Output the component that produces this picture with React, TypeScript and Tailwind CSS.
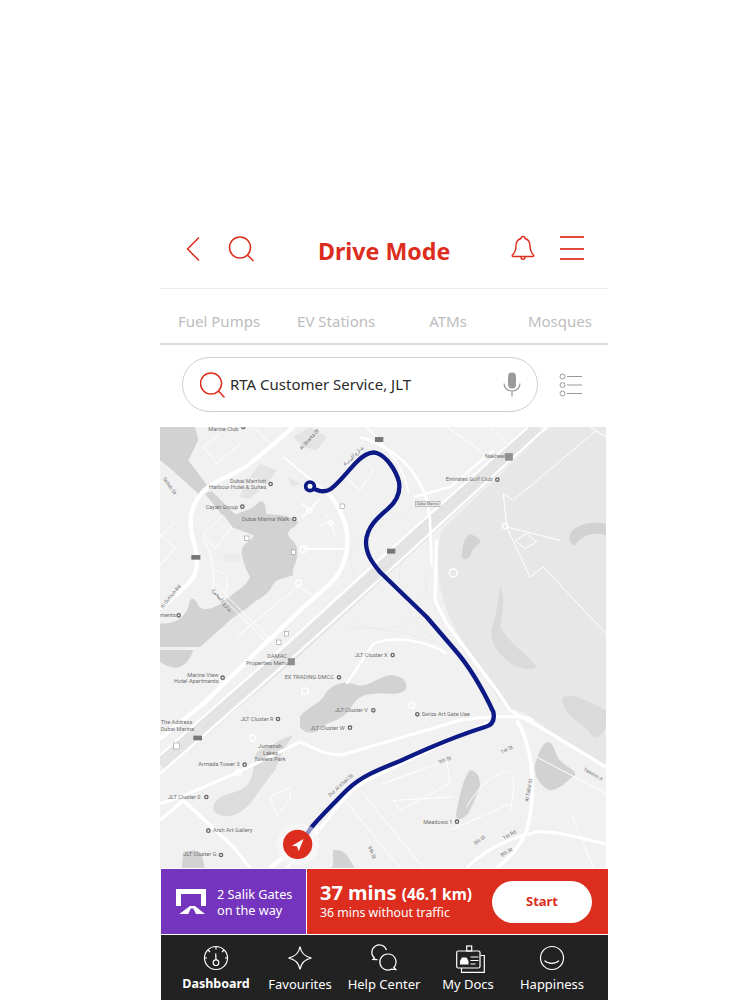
import React from "react";

const RED = "#dc2d1e";

const Header = () => (
  <div className="flex h-[69px] items-start border-b border-[#ececec] pt-[10px]">
    <svg className="ml-[25px] mt-[6px]" width="16" height="26" viewBox="0 0 16 26" fill="none" stroke={RED} strokeWidth="1.5">
      <path d="M14 1.5 2.5 13 14 24.5" />
    </svg>
    <svg className="ml-[27px] mt-[6px]" width="26" height="26" viewBox="0 0 26 26" fill="none" stroke={RED} strokeWidth="1.5">
      <circle cx="12" cy="11.5" r="10.5" />
      <path d="m19.5 19 6 6" />
    </svg>
    <div className="ml-[64px] mt-[4px] w-[133px] whitespace-nowrap text-[23.2px] leading-[34px] font-bold text-[#dc2d1e]">Drive Mode</div>
    <svg className="ml-[60px] mt-[5px]" width="24" height="26" viewBox="0 0 24 26" fill="none" stroke={RED} strokeWidth="1.4">
      <path d="M12 1.5c1.4 0 2 .9 2 2 3.4 1 5 3.8 5 7.5 0 4.500 1 6.500 3.500 9 .6.800.2 1.500-.8 1.500H2.300c-1 0-1.400-.7-.8-1.500 2.500-2.500 3.500-4.500 3.500-9 0-3.700 1.600-6.500 5-7.500 0-1.100.6-2 2-2Z" />
      <path d="M10 22c0 3 4 3 4 0" />
    </svg>
    <div className="ml-[25px] mt-[6px] w-[24px]">
      <div className="h-[2px] bg-[#e2483a]" />
      <div className="mt-[10px] h-[2px] bg-[#e2483a]" />
      <div className="mt-[8px] h-[2px] bg-[#e2483a]" />
    </div>
  </div>
);

const Tabs = () => (
  <div className="flex h-[56px] items-center border-b-2 border-[#dcdcdc] pt-[10px] pl-[18px] text-[15px] whitespace-nowrap text-[#bdbdbd]">
    <span>Fuel Pumps</span>
    <span className="ml-[37px]">EV Stations</span>
    <span className="ml-[54px]">ATMs</span>
    <span className="ml-[61px]">Mosques</span>
  </div>
);

const SearchRow = () => (
  <div className="flex h-[82px] items-center pb-[3px] pl-[22px]">
    <div className="flex h-[55px] w-[356px] items-center rounded-full border border-[#cfcfcf] pl-[17px]">
      <svg width="25" height="26" viewBox="0 0 25 26" fill="none" stroke={RED} strokeWidth="1.5">
        <circle cx="11" cy="11.500" r="10.500" />
        <path d="m18.500 19 6 6.500" />
      </svg>
      <span className="ml-[5px] text-[15px] whitespace-nowrap text-[#2a2a2a]">RTA Customer Service, JLT</span>
      <svg className="ml-[92px]" width="18" height="25" viewBox="0 0 18 25" fill="none">
        <rect x="5" y="0.500" width="8" height="16" rx="4" fill="#9a9a9a" />
        <path d="M1 11.500c0 4.500 3.500 7.500 8 7.500s8-3 8-7.500M9 19v5.500" stroke="#9a9a9a" strokeWidth="1.200" />
      </svg>
    </div>
    <svg className="ml-[21px]" width="24" height="24" viewBox="0 0 24 24" fill="none" stroke="#9a9a9a" strokeWidth="1">
      <circle cx="3.500" cy="3.500" r="2.500" />
      <circle cx="3.500" cy="12" r="2.500" />
      <circle cx="3.500" cy="20.500" r="2.500" />
      <path d="M8 3.500h15M8 12h15M8 20.500h15" />
    </svg>
  </div>
);

const labels: [number, number, string][] = [
  [145, 12, "Marine Club"],
  [210, 167, "Dubai Marriott"],
  [147, 187, "Harbour Hotel & Suites"],
  [137, 245, "Cayan Group"],
  [246, 281, "Dubai Marina Walk"],
  [975, 94, "Nakheel"],
  [857, 163, "Emirates Golf Club"],
  [0, 571, "ments"],
  [322, 694, "DAMAC"],
  [258, 713, "Properties Metro"],
  [584, 689, "JLT Cluster X"],
  [374, 757, "EX TRADING DMCC"],
  [82, 749, "Marina View"],
  [42, 768, "Hotel Apartments"],
  [525, 855, "JLT Cluster V"],
  [785, 868, "Swiss Art Gate Uae"],
  [242, 882, "JLT Cluster R"],
  [451, 908, "JLT Cluster W"],
  [2, 892, "The Address"],
  [2, 911, "Dubai Marina"],
  [295, 964, "Jumeirah"],
  [309, 984, "Lakes"],
  [283, 1003, "Towers Park"],
  [115, 1018, "Armada Tower 3"],
  [24, 1115, "JLT Cluster 0"],
  [159, 1216, "Arsh Art Gallery"],
  [790, 1190, "Meadows 1"],
  [70, 1288, "JLT Cluster G"],
];

const pins: [number, number][] = [
  [250, 0], [332, 171], [247, 239], [403, 276], [1012, 158], [56, 565], [698, 684], [537, 751], [188, 752],
  [640, 850], [772, 862], [354, 876], [570, 902], [254, 1013], [139, 1110], [145, 1211], [891, 1184], [183, 1284],
];

const tilted: [number, number, number, string][] = [
  [425, 70, -48, "Al Sharta St"],
  [555, 118, -45, "شارع الميناء"],
  [8, 155, 55, "Sehab St"],
  [8, 545, -50, "Al Sufouh Rd"],
  [155, 490, 50, "شارع الصفوح"],
  [510, 1110, -42, "Dur Al Khail St"],
  [838, 1010, -20, "9th St"],
  [1025, 980, -25, "1st St"],
  [1105, 1125, -80, "Al Tallal St"],
  [1270, 1030, 30, "Yasmin A"],
  [945, 1255, -35, "5th St"],
  [1032, 1238, -28, "1st Rd"],
  [1025, 1290, -30, "8th St"],
  [625, 1260, 70, "6th St"],
];

// map drawn in 3x units so it lines up with zoomed crops of the screenshot
const MapView = () => (
  <svg className="block h-[441px] w-[446px]" viewBox="0 0 1338 1323">
    <rect width="1338" height="1323" fill="#f1f1f1" />
    <path d="M1170 0H1338V1020C1280 990 1190 930 1100 860 1060 840 1030 850 1000 790 960 720 880 620 850 520 830 450 825 380 845 310Z" fill="#e7e7e7" />
    <g fill="#e4e4e4">
      <path d="M300 110 350 130 320 175 270 150Z" />
      <path d="M400 30 450 0 500 30 470 70 430 60Z" />
      <path d="M385 150 420 170 395 180Z" />
      <path d="M250 180 300 190 270 215 240 210Z" />
    </g>
    <g fill="#d2d2d2">
      <path d="M0 0H105L115 40 85 100 145 180 120 205C80 170 40 130 0 100Z" />
      <path d="M135 200 155 192 225 262C260 250 280 245 295 225 315 215 318 240 318 262 350 262 390 265 415 285 405 305 380 305 385 325 395 345 415 345 412 385 410 410 395 420 400 445 370 455 345 455 335 480 320 510 290 515 265 540L215 575 120 660H0V590C40 590 80 580 90 520 105 505 110 530 118 540 135 555 170 540 190 525 215 500 260 480 270 450 255 420 245 395 245 370 250 345 280 340 280 325L215 300Z" />
      <path d="M930 322C945 325 960 335 962 345 950 355 935 365 932 385 925 400 905 402 905 385 910 360 905 340 930 322Z" />
      <path d="M1230 320C1250 290 1300 280 1338 290V325C1300 315 1270 320 1245 355 1230 350 1225 335 1230 320Z" />
      <path d="M1020 480C1035 500 1030 560 1020 600 1040 640 1100 680 1130 720 1100 735 1060 720 1030 690 1000 660 985 630 1000 590 1010 560 1015 510 1020 480Z" fill="#dadada" />
      <path d="M1210 810C1240 800 1270 815 1338 850V900C1330 920 1310 940 1295 925 1280 895 1240 880 1225 860 1210 840 1205 825 1210 810Z" fill="#dadada" />
      <path d="M0 669H100C90 700 70 725 40 722 20 718 10 710 0 705Z" />
      <path d="M420 870C435 845 470 835 490 810 505 780 540 760 580 770 620 790 650 750 690 745 720 745 745 760 738 785 720 810 680 795 650 800 610 800 590 810 575 840 555 870 530 880 500 890 480 915 440 930 420 900Z" />
      <path d="M290 975C310 965 340 955 350 945 370 935 395 925 400 925 380 950 360 990 345 1030 320 1060 300 1090 270 1130 240 1160 210 1175 180 1165 160 1155 150 1145 170 1120 195 1095 240 1100 265 1070 285 1040 280 1000 290 975Z" fill="#dcdcdc" />
      <path d="M1160 945C1185 945 1185 985 1200 1000 1225 1025 1250 1030 1245 1045 1220 1060 1200 1090 1170 1090 1135 1075 1120 1040 1125 1010 1135 985 1140 960 1160 945Z" />
      <path d="M930 1030C950 1030 960 1050 960 1075 950 1110 935 1140 925 1160 910 1175 890 1185 888 1165 895 1130 905 1060 930 1030Z" />
      <path d="M520 1270C545 1265 560 1280 570 1300L585 1323H515C525 1310 515 1290 520 1270Z" />
      <path d="M70 1275C90 1270 120 1265 125 1285L135 1323H65Z" />
    </g>
    <path d="M1135 0 400 672 0 1012" fill="none" stroke="#e3e3e3" strokeWidth="46" />
    <g fill="none" stroke="#efefef" strokeWidth="1.500">
      <path d="M1125 0 395 665 0 1000M1145 0 405 680 0 1025" />
      <path d="M590 330C560 380 570 460 610 500M620 270C690 290 720 270 760 240M740 390C700 430 720 500 760 520 800 530 810 470 790 430M580 560C600 620 700 620 800 560M560 600C650 600 780 620 860 660M720 480C740 540 760 600 830 640" stroke="#e4e4e4" />
    </g>
    <g fill="none" stroke="#fff">
      <path d="M1160 0 700 420 420 672 0 1040" strokeWidth="7" />
      <path d="M1105 0 660 395 380 650 0 985" strokeWidth="6" />
      <path d="M400 0 330 60 270 110C220 150 150 160 120 205 90 240 85 290 100 340 120 400 115 440 85 470L0 545" strokeWidth="13" />
      <path d="M370 90 505 200" strokeWidth="6" />
      <path d="M505 200C530 225 545 260 555 290 570 340 560 400 535 440 510 480 460 510 400 570L310 655 130 830 0 935" strokeWidth="13" />
      <path d="M155 480 320 645M165 472 330 637" strokeWidth="3" />
      <path d="M600 30C720 70 800 150 810 280L815 415" strokeWidth="8" />
      <path d="M1000 70 870 180 760 210" strokeWidth="7" />
      <path d="M620 0C680 60 740 130 745 200" strokeWidth="5" />
      <path d="M830 340 825 520 860 590 1010 790 1050 850 1140 900 1338 1020" strokeWidth="10" />
      <path d="M0 1180 70 1120 220 1260 270 1323" strokeWidth="10" />
      <path d="M0 1130C100 1100 250 1030 420 945 460 960 510 995 560 980L900 880C960 870 1080 860 1120 880" strokeWidth="9" />
      <path d="M380 1323C500 1200 540 1100 620 1060L1000 880" strokeWidth="9" />
      <path d="M1070 880C1120 960 1130 1100 1100 1210 1080 1260 1050 1290 1010 1323" strokeWidth="11" />
      <path d="M920 1323C980 1260 1060 1230 1130 1215 1200 1210 1280 1240 1338 1250" strokeWidth="9" />
      <path d="M330 1323 480 1200" strokeWidth="14" />
      <path d="M560 770 640 650C700 625 800 640 860 680" strokeWidth="8" />
      <path d="M430 365H550" strokeWidth="6" />
      <path d="M425 228 448 250 480 215M448 250 425 270" strokeWidth="5" />
    </g>
    <g fill="none" stroke="#fff" strokeWidth="3">
      <path d="M0 320 45 365 0 415M45 285 0 330" />
      <path d="M130 320 190 265 215 300 165 365Z" />
      <path d="M280 0 330 50M180 20 130 60 170 110 240 50" />
      <path d="M1338 30 1290 0M1310 10 1060 220 1030 200 1040 300 1200 340M1040 300 1110 450 1150 420 1338 620M1065 340 1100 320 1130 345 1095 365Z" />
      <path d="M860 0 960 70M990 0 1040 50" />
      <path d="M555 150 600 190 640 130 620 110" />
      <path d="M920 1140C930 1120 970 1060 1020 1040 1080 1010 1060 1100 1050 1160M870 1210 1050 1130" />
      <path d="M670 1070 860 1000 870 1070 720 1150 700 1120 880 1110M610 1100 790 1323M555 1120 720 1323" />
      <path d="M1235 1165 1300 1323M1130 990 1338 1100" />
      <path d="M330 1110 390 1080 390 1115 350 1165Z" />
      <path d="M416 478 350 530 230 630M416 478 465 510" />
      <path d="M475 300 510 285 525 325M510 285 495 258" />
      <path d="M125 330C155 370 165 430 160 480M170 430C200 430 215 480 190 500" />
    </g>
    <g fill="none" stroke="#fff" strokeWidth="4">
      <circle cx="416" cy="468" r="9" />
      <circle cx="430" cy="367" r="10" />
      <circle cx="448" cy="250" r="8" />
      <circle cx="512" cy="287" r="7" />
      <circle cx="880" cy="438" r="12" />
      <circle cx="1035" cy="297" r="8" />
      <circle cx="435" cy="793" r="10" />
      <circle cx="278" cy="933" r="9" />
      <circle cx="235" cy="1036" r="9" />
      <circle cx="755" cy="835" r="9" />
    </g>
    <rect x="190" y="378" width="52" height="24" fill="#ececec" />
    <g fontFamily="Roboto, sans-serif" fontSize="17" fill="#6f6f6f">
      {labels.map(([x, y, t]) => (
        <text key={t} x={x} y={y}>{t}</text>
      ))}
      {tilted.map(([x, y, r, t]) => (
        <text key={t} x={x} y={y} fontSize="15" transform={`rotate(${r} ${x} ${y})`}>{t}</text>
      ))}
    </g>
    <g fill="#f4f4f4" stroke="#666" strokeWidth="4">
      {pins.map(([x, y]) => (
        <circle key={`${x}-${y}`} cx={x} cy={y} r="5" />
      ))}
    </g>
    <g fill="#fff" stroke="#8a8a8a" strokeWidth="1.500">
      <rect x="1036" y="79" width="22" height="21" fill="#8f8f8f" />
      <rect x="384" y="694" width="20" height="20" fill="#8f8f8f" />
      <rect x="766" y="223" width="74" height="15" fill="#ececec" />
      <rect x="645" y="30" width="25" height="15" fill="#777" stroke="none" />
      <rect x="681" y="365" width="25" height="15" fill="#777" stroke="none" />
      <rect x="94" y="384" width="27" height="14" fill="#777" stroke="none" />
      <rect x="100" y="926" width="26" height="14" fill="#777" stroke="none" />
      <rect x="540" y="231" width="14" height="14" />
      <rect x="254" y="327" width="13" height="13" />
      <rect x="394" y="369" width="13" height="13" />
      <rect x="373" y="614" width="13" height="13" />
      <rect x="350" y="639" width="13" height="13" />
      <rect x="41" y="948" width="18" height="18" />
    </g>
    <text x="770" y="234" fontFamily="Roboto, sans-serif" fontSize="11" fill="#666">Dubai Marina</text>
    <circle cx="413" cy="1252" r="64" fill="#f7f7f7" fillOpacity="0.85" />
    <path
      d="M450 178C465 190 490 200 512 186 535 170 565 130 590 105 610 85 630 72 650 78 680 88 708 130 717 165 722 195 708 225 682 247 655 270 620 300 618 345 618 380 635 405 660 435L800 570 885 669C925 715 965 780 1000 855 1005 880 995 895 975 900 895 925 800 965 720 1002 650 1030 600 1050 560 1090 530 1120 490 1160 455 1200"
      fill="none"
      stroke="#0d1a85"
      strokeWidth="13"
      strokeLinecap="round"
      strokeLinejoin="round"
    />
    <circle cx="450" cy="178" r="13" fill="#fff" stroke="#0d1a85" strokeWidth="11" />
    <path d="M455 1200 440 1222" stroke="#8f93c8" strokeWidth="13" fill="none" />
    <circle cx="413" cy="1252" r="44" fill={RED} />
    <path d="M431 1236 396 1256 411 1258 416 1273Z" fill="#fff" />
  </svg>
);

const navItems = [
  {
    label: "Dashboard",
    bold: true,
    icon: (
      <>
        <circle cx="14" cy="14" r="11.500" />
        <circle cx="14" cy="18.700" r="2.800" />
        <path d="M14 16 13.700 9.500M14 2.500v3M6 6l2 2M22 6l-2 2M2.500 14H5M25.500 14H23" />
      </>
    ),
  },
  {
    label: "Favourites",
    icon: <path d="M14 2.500C15 9 18 12.500 25.500 14 18 15.500 15 19 14 25.500 13 19 10 15.500 2.500 14 10 12.500 13 9 14 2.500Z" />,
  },
  {
    label: "Help Center",
    icon: (
      <>
        <path d="M16.500 6.200A7.500 7.500 0 1 0 4.600 14.200L3 15.500l4.500.2" />
        <path d="M18 10a8 8 0 0 1 5.800 13.500l2 2-4.500-.3A8 8 0 1 1 18 10Z" />
      </>
    ),
  },
  {
    label: "My Docs",
    icon: (
      <>
        <rect x="2.700" y="7" width="23.300" height="17" rx="1.500" />
        <path d="M26.500 11.500h3.800v16.800H7.500V24" />
        <rect x="12.700" y="2" width="5" height="5" />
        <path d="M16.500 13h8M16.500 16.500h8M16.500 20h5" />
        <path d="M6 20.500v-3.500l2-3.500h4.500l2 3.500v3.500Z" fill="#fff" stroke="none" />
      </>
    ),
  },
  {
    label: "Happiness",
    icon: (
      <>
        <circle cx="14" cy="14" r="11.500" />
        <path d="M6.500 16.700c3.500 3.500 11 3.500 14.500 0" />
      </>
    ),
  },
];

const BottomBar = () => (
  <>
    <div className="flex h-[66px] border-t border-white">
      <div className="ml-px flex w-[145px] items-center bg-[#7434bd] pl-[15px]">
        <svg width="30" height="25" viewBox="0 0 30 25" fill="#fff">
          <path d="M0 0H30V17H25V5H5V17H0Z" />
          <path d="M3.300 25 14 17H19L29 25H20L17.300 19.500H14.700L12.300 25Z" />
        </svg>
        <div className="ml-[11px] text-[12.700px] leading-[16px] whitespace-nowrap text-white">
          <div>2 Salik Gates</div>
          <div>on the way</div>
        </div>
      </div>
      <div className="ml-px flex flex-1 items-center bg-[#dc2d1e] pl-[13px] text-white">
        <div className="w-[172px] -translate-y-px whitespace-nowrap">
          <div className="text-[20px] leading-[24px] font-bold">
            37 mins <span className="text-[15.500px]">(46.1 km)</span>
          </div>
          <div className="text-[12.300px] leading-[14px]">36 mins without traffic</div>
        </div>
        <div className="flex h-[42px] w-[100px] items-center justify-center rounded-full bg-white text-[13px] font-bold text-[#dc2d1e]">Start</div>
      </div>
    </div>
    <div className="ml-px flex h-[66px] border-t border-white bg-[#222222] pl-[13px] text-[13px] whitespace-nowrap text-white">
      {navItems.map((item) => (
        <div key={item.label} className="flex w-[84px] flex-col items-center pt-[6px]">
          <svg width="34" height="34" viewBox="-3 -3 34 34" fill="none" stroke="#fff" strokeWidth="1.200">
            {item.icon}
          </svg>
          <span className={item.bold ? "text-[12.500px] leading-[18px] font-bold" : "leading-[18px]"}>{item.label}</span>
        </div>
      ))}
    </div>
  </>
);

export default function App() {
  return (
    <div className="h-[1000px] w-[750px] overflow-hidden bg-white pt-[220px] pl-[160px] font-['Noto_Sans',sans-serif]">
      <div className="w-[448px]">
        <Header />
        <Tabs />
        <SearchRow />
        <MapView />
        <BottomBar />
      </div>
    </div>
  );
}
